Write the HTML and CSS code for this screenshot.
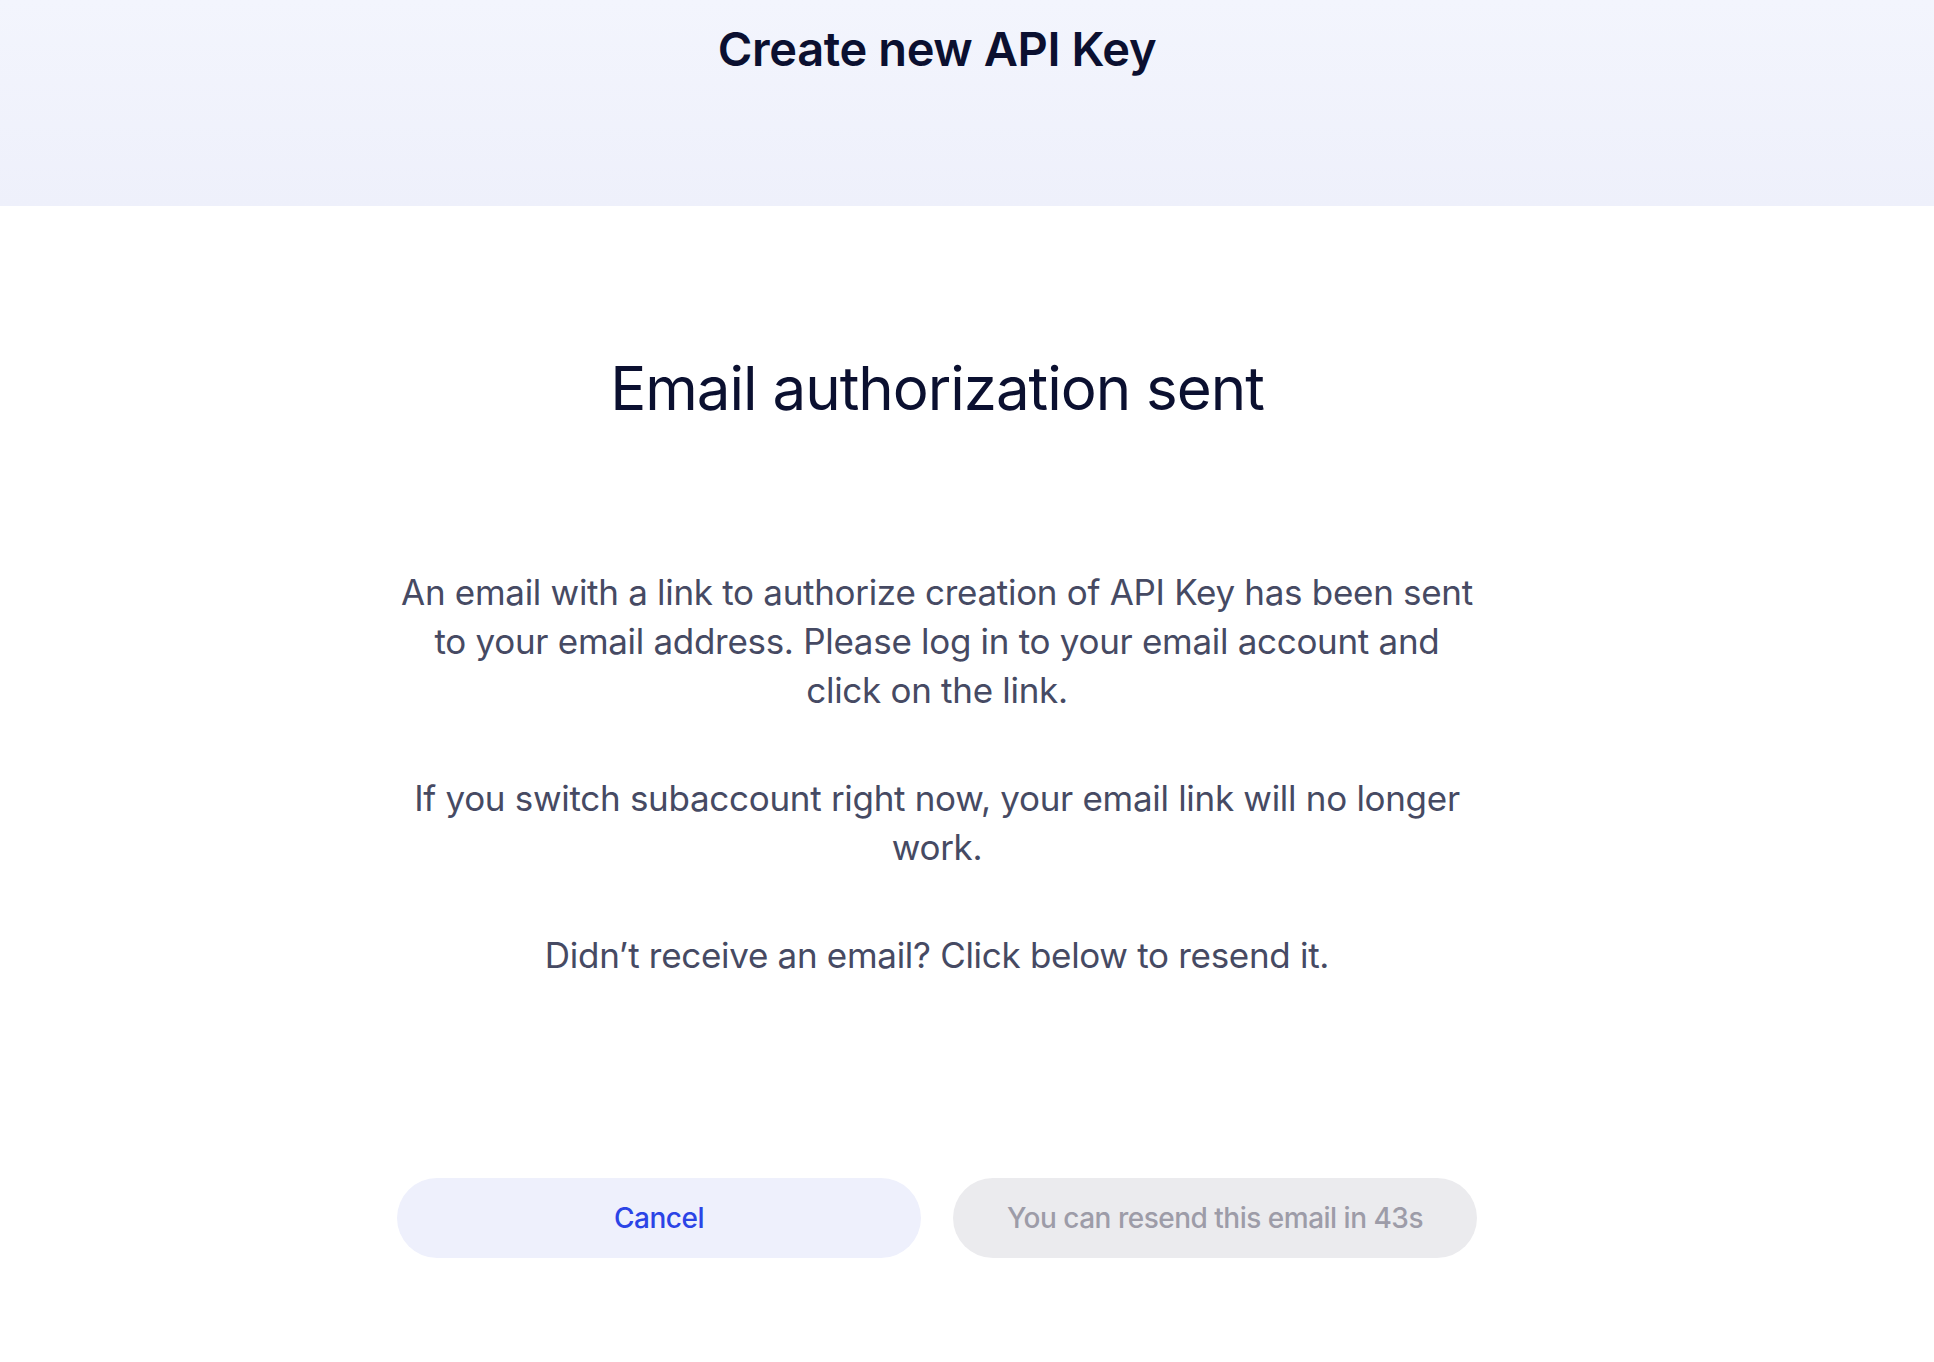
FILE: index.html
```html
<!DOCTYPE html>
<html lang="en">
<head>
    <meta charset="UTF-8">
    <meta name="viewport" content="width=device-width, initial-scale=1.0">
    <title>Create new API Key</title>
    <link rel="stylesheet" href="styles.css">
</head>
<body>

<!-- Top band with page title -->
<div class="top-band">
    <h1 class="page-title">Create new API Key</h1>
</div>

<!-- Authorization message -->
<div class="auth-box">
    <h2 class="auth-title">Email authorization sent</h2>

    <p class="auth-text first">An email with a link to authorize creation of API Key has been sent to your email address. Please log in to your email account and click on the link.</p>
    <p class="auth-text">If you switch subaccount right now, your email link will no longer work.</p>
    <p class="auth-text">Didn’t receive an email? Click below to resend it.</p>

    <div class="actions">
        <button class="btn btn-cancel">Cancel</button>
        <button class="btn btn-resend" disabled>You can resend this email in 43s</button>
    </div>
</div>

</body>
</html>
```

FILE: styles.css
```css
body {
    margin: 0;
    font-family: Inter, "Noto Sans", sans-serif;
    background: #ffffff;
    color: #0b1030;
}
.top-band {
    height: 206px;
    padding-right: 60px;
    background: linear-gradient(180deg, #f3f5fd 0%, #eef0fb 100%);
    text-align: center;
}
.page-title {
    margin: 0;
    padding-top: 19px;
    font-size: 47px;
    line-height: 60px;
    font-weight: 600;
    letter-spacing: -0.4px;
    color: #0b1030;
}
.auth-box {
    width: 1080px;
    margin: 0 auto;
    padding-right: 60px;
    text-align: center;
}
.auth-title {
    margin: 146px 0 0;
    font-size: 60px;
    line-height: 72px;
    font-weight: 400;
    letter-spacing: -1px;
    color: #0b1030;
}
.auth-text {
    margin: 59px 0 0;
    font-size: 35px;
    line-height: 49px;
    color: #464a63;
    letter-spacing: -0.3px;
}
.auth-text.first {
    margin-top: 144px;
}
.actions {
    display: flex;
    gap: 32px;
    margin-top: 198px;
}
.btn {
    flex: 1;
    height: 80px;
    border: none;
    border-radius: 40px;
    font-family: Inter, "Noto Sans", sans-serif;
    font-size: 28px;
    font-weight: 500;
    letter-spacing: -0.5px;
}
.btn-cancel {
    background: #eef0fc;
    color: #2b44e6;
    cursor: pointer;
}
.btn-resend {
    background: #ebebee;
    color: #9d9ca8;
}
```
